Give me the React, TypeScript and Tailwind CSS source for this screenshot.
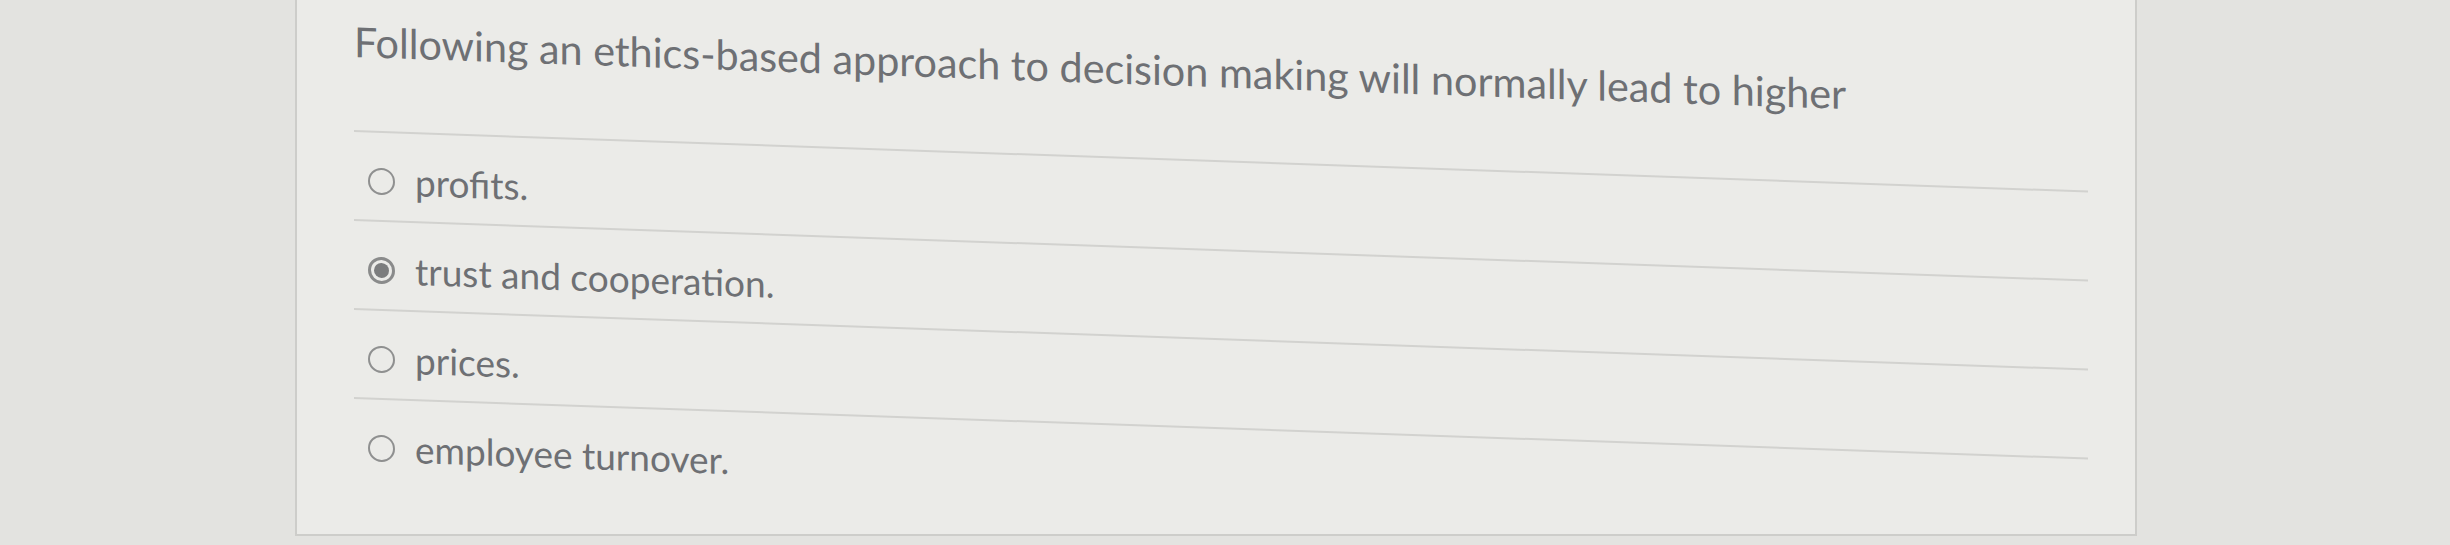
const options = [
  { id: 'a', label: 'profits.', checked: false },
  { id: 'b', label: 'trust and cooperation.', checked: true },
  { id: 'c', label: 'prices.', checked: false },
  { id: 'd', label: 'employee turnover.', checked: false },
]

function Radio({ checked }: { checked: boolean }) {
  if (checked) {
    return (
      <span className="flex items-center justify-center w-[27px] h-[27px] rounded-full border-[3px] border-[#8a8b8b] shrink-0">
        <span className="w-[15px] h-[15px] rounded-full bg-[#7c7d7e]" />
      </span>
    )
  }
  return <span className="w-[27px] h-[27px] rounded-full border-[2.5px] border-[#8f9090] shrink-0" />
}

export default function App() {
  return (
    <div className="w-[2450px] h-[545px] overflow-hidden bg-[#e3e3e0] font-['Lato',sans-serif]">
      <div className="ml-[295px] w-[1842px] h-[538px] -mt-[2px] border-2 border-[#cdcdca] bg-[#ebebe8]">
        <div className="ml-[57px] w-[1734px] origin-top-left skew-y-[2deg]">
          <h1 className="pt-[16px] h-[130px] text-[41.3px] leading-[50px] text-[#6e7074] font-normal">
            Following an ethics-based approach to decision making will normally lead to higher
          </h1>
          {options.map((o) => (
            <label
              key={o.id}
              className="flex items-center gap-[20px] border-t-2 border-[#d2d2cf] pt-[28px] pb-[19px] pl-[14px]"
            >
              <Radio checked={o.checked} />
              <span className="text-[37px] leading-[40px] text-[#6e7074]">{o.label}</span>
            </label>
          ))}
        </div>
      </div>
    </div>
  )
}
